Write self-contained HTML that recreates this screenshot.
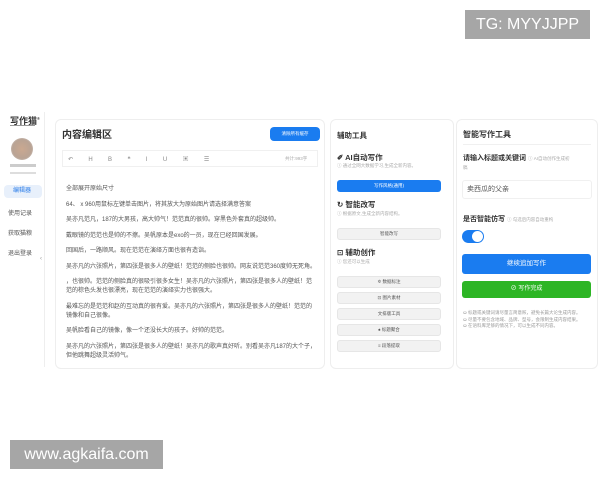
<!DOCTYPE html>
<html><head><meta charset="utf-8"><style>
*{margin:0;padding:0;box-sizing:border-box}
body{width:600px;height:480px;background:#fff;position:relative;overflow:hidden;font-family:"Liberation Sans","Noto Sans CJK SC",sans-serif;color:#333}
.a{position:absolute;white-space:nowrap}
.t{font-size:6px;color:#555}
.g{font-size:4.5px;color:#aaa}
.btn{position:absolute;border-radius:3px;font-size:4.5px;text-align:center}
.gb{background:#f2f2f2;border:1px solid #e6e6e6;color:#555;height:12px;line-height:10px;left:337px;width:104px}
.ed p{margin-bottom:6.5px}
</style></head><body>
<div class="a" style="left:465px;top:10px;width:125px;height:29px;background:#a6a6a6;color:#fff;font-size:16px;line-height:29px;text-align:center">TG: MYYJJPP</div>
<div class="a" style="left:10px;top:440px;width:153px;height:29px;background:#a6a6a6;color:#fff;font-size:16px;line-height:29px;text-align:center">www.agkaifa.com</div>

<div class="a" style="left:0;top:112px;width:45px;height:255px;border-right:1px solid #eee"></div>
<div class="a" style="left:10px;top:114px;font-size:9px;font-weight:bold;color:#333">写作猫<sup style="font-size:4px">®</sup></div>
<div class="a" style="left:10px;top:125px;width:25px;height:1px;background:#999"></div>
<div class="a" style="left:11px;top:138px;width:22px;height:22px;border-radius:50%;background:radial-gradient(#caa890,#b9a394 60%,#ddd)"></div>
<div class="a" style="left:10px;top:164px;width:26px;height:3px;background:#ccc"></div>
<div class="a" style="left:10px;top:172px;width:26px;height:2px;background:#ddd"></div>
<div class="a" style="left:4px;top:185px;width:38px;height:13px;border-radius:4px;background:#e8f0fb;color:#2b7de9;font-size:6px;line-height:13px;padding-left:9px">编辑器</div>
<div class="a t" style="left:8px;top:208px">使用记录</div>
<div class="a t" style="left:8px;top:228px">获取猫粮</div>
<div class="a t" style="left:8px;top:248px">退出登录</div>
<div class="a" style="left:40px;top:256px;font-size:6px;color:#999">‹</div>

<div class="a" style="left:55px;top:119px;width:270px;height:250px;border:1px solid #eee;border-radius:6px"></div>
<div class="a" style="left:62px;top:126px;font-size:10px;font-weight:bold;color:#333">内容编辑区</div>
<div class="btn" style="left:270px;top:127px;width:50px;height:14px;line-height:14px;background:#1a7cf0;color:#fff;border-radius:4px">清除所有缓存</div>
<div class="a" style="left:62px;top:150px;width:256px;height:17px;border:1px solid #f0f0f0"></div>
<div class="a" style="left:68px;top:154px;font-size:6px;color:#888;word-spacing:6px;white-space:pre">↶  H  B  ❝  I  U  ▣  ☰</div>
<div class="a g" style="left:285px;top:156px">共计:993字</div>
<div class="ed" style="position:absolute;left:66px;top:185px;width:250px;font-size:6px;color:#555;line-height:9px;white-space:normal">
<p>全部展开原始尺寸</p>
<p>64、 x 960用鼠标左键单击图片，将其放大为原始图片请选择满意答案</p>
<p>吴亦凡范凡，187的大男孩，高大帅气！范范真的很帅。穿黑色外套真的超级帅。</p>
<p>戴眼镜的范范也是帅的不擦。吴帆原本是exo的一员，现在已经回国发展。</p>
<p>回国后，一路顺风。现在范范在演绎方面也很有造诣。</p>
<p>吴亦凡的六张照片，第四张是很多人的壁纸！范范的侧脸也很帅。网友说范范360度帅无死角。</p>
<p>，也很帅。范范的侧脸真的很吸引很多女生！吴亦凡的六张照片，第四张是很多人的壁纸！范范的棕色头发也很漂亮，现在范范的演绎实力也很强大。</p>
<p>最难忘的是范范和赵的互动真的很有爱。吴亦凡的六张照片，第四张是很多人的壁纸！范范的镜像和自己很像。</p>
<p>吴帆脸看自己的镜像，像一个还没长大的孩子。好帅的范范。</p>
<p>吴亦凡的六张照片，第四张是很多人的壁纸！吴亦凡的歌声真好听。别看吴亦凡187的大个子，但他跳舞超级灵活帅气。</p>
</div>

<div class="a" style="left:330px;top:119px;width:124px;height:250px;border:1px solid #eee;border-radius:6px"></div>
<div class="a" style="left:337px;top:130px;font-size:7.5px;font-weight:bold">辅助工具</div>
<div class="a" style="left:337px;top:152px;font-size:7.5px;font-weight:bold">✐ AI自动写作</div>
<div class="a g" style="left:337px;top:163px">ⓘ 通过全网大数据学习,生成全新内容。</div>
<div class="btn" style="left:337px;top:180px;width:104px;height:12px;line-height:12px;background:#1a7cf0;color:#fff">写作风格(通用)</div>
<div class="a" style="left:337px;top:199px;font-size:7.5px;font-weight:bold">↻ 智能改写</div>
<div class="a g" style="left:337px;top:211px">ⓘ 根据原文,生成全新内容结构。</div>
<div class="btn gb" style="top:228px">智能改写</div>
<div class="a" style="left:337px;top:247px;font-size:7.5px;font-weight:bold">⊡ 辅助创作</div>
<div class="a g" style="left:337px;top:259px">ⓘ 您还可以生成</div>
<div class="btn gb" style="top:276px">✲ 数据标注</div>
<div class="btn gb" style="top:292px">⊡ 图片素材</div>
<div class="btn gb" style="top:308px">文排版工具</div>
<div class="btn gb" style="top:324px">♠ 标题聚合</div>
<div class="btn gb" style="top:340px">≡ 段落提取</div>

<div class="a" style="left:456px;top:119px;width:142px;height:250px;border:1px solid #eee;border-radius:6px"></div>
<div class="a" style="left:463px;top:129px;font-size:8px;font-weight:bold">智能写作工具</div>
<div class="a" style="left:463px;top:144px;width:128px;height:1px;background:#f0f0f0"></div>
<div class="a" style="left:463px;top:153px;font-size:7px;font-weight:bold">请输入标题或关键词 <span style="font-size:4.5px;color:#aaa;font-weight:normal">ⓘ AI自动创作生成初</span></div>
<div class="a g" style="left:463px;top:165px">稿</div>
<div class="a" style="left:462px;top:180px;width:130px;height:19px;border:1px solid #f0f0f0;border-radius:3px;font-size:7px;color:#555;line-height:17px;padding-left:4px">卖西瓜的父亲</div>
<div class="a" style="left:463px;top:214px;font-size:7px;font-weight:bold">是否智能仿写 <span style="font-size:4.5px;color:#aaa;font-weight:normal">ⓘ 勾选后内容自动重构</span></div>
<div class="a" style="left:462px;top:230px;width:22px;height:13px;border-radius:7px;background:#1a7cf0"></div>
<div class="a" style="left:472px;top:231px;width:11px;height:11px;border-radius:50%;background:#fff"></div>
<div class="btn" style="left:462px;top:254px;width:129px;height:20px;line-height:20px;background:#1a7cf0;color:#fff;font-size:6.5px">继续追加写作</div>
<div class="btn" style="left:462px;top:281px;width:129px;height:17px;line-height:17px;background:#2db525;color:#fff;font-size:6px">⊘ 写作完成</div>
<div style="position:absolute;left:463px;top:310px;width:130px;font-size:4.5px;color:#999;line-height:6.5px;white-space:normal">
<p>⛀ 标题或关键词请尽量言简意赅，避免长篇大论生成内容。</p>
<p>⛀ 尽量不要包含地域、品牌、型号，会限制生成内容结果。</p>
<p>⛀ 在语料库足够的情况下，可以生成不同内容。</p>
</div>
</body></html>
